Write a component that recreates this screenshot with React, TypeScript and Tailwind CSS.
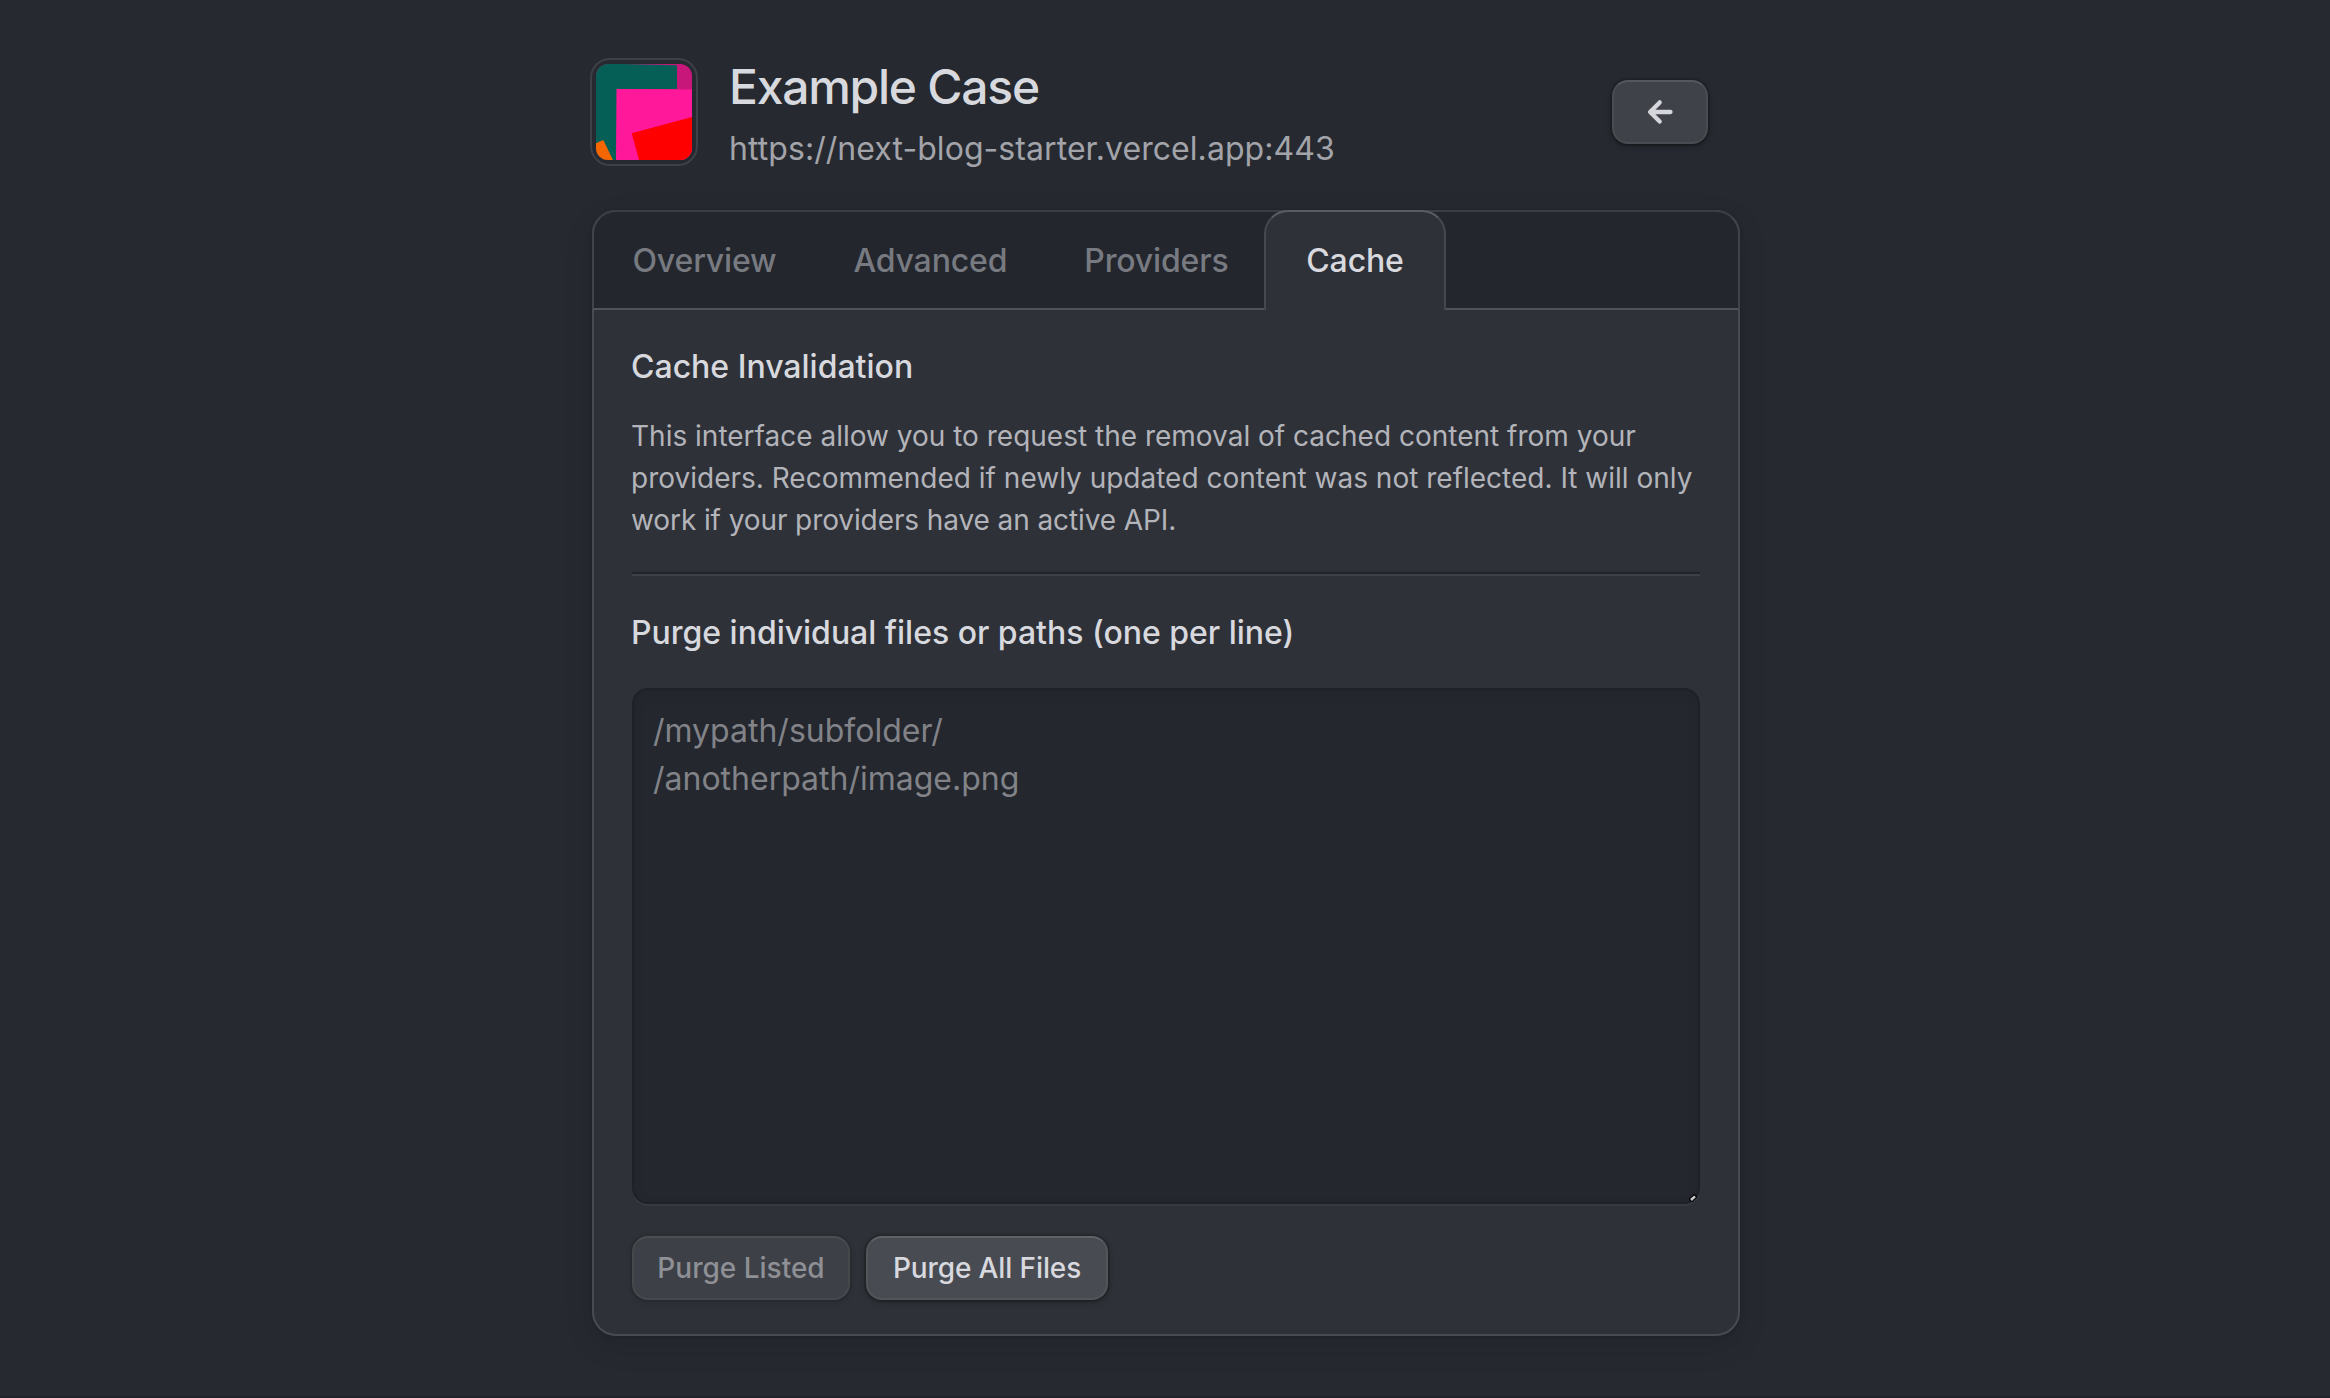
function Avatar() {
  return (
    <div className="mt-1 size-[108px] shrink-0 rounded-[20px] border-2 border-[#3d4047] p-1">
      <svg viewBox="0 0 96 96" className="size-24 rounded-xl">
        <rect width="96" height="96" fill="#c8177b" />
        <path d="M0 0H27L81 1.3V25H21V96H0Z" fill="#055f56" />
        <path d="M20.5 24.9L96 25.4V96H20Z" fill="#ff1899" />
        <path d="M35.7 69.3L96 53V96H43Z" fill="#ff0000" />
        <path d="M0 79.3L7.3 76L17 96H0Z" fill="#f56600" />
      </svg>
    </div>
  );
}

function BackButton() {
  return (
    <button
      aria-label="Back"
      className="mt-[26px] mr-8 ml-auto flex h-16 w-24 items-center justify-center rounded-2xl border-2 border-[#4a4c51] border-t-[#55575c] bg-[#3f4248] text-[#d6d7dd] shadow-[0_0_0_2px_rgba(0,0,0,0.13),0_2px_6px_rgba(0,0,0,0.3)]"
    >
      <svg viewBox="0 0 32 32" className="size-8" fill="none" stroke="currentColor" strokeWidth="4.3" strokeLinecap="round" strokeLinejoin="round">
        <path d="M15.7 6.4L6.1 16L15.7 25.6M7 16H26.5" />
      </svg>
    </button>
  );
}

const idleTabs = ["Overview", "Advanced", "Providers"];

function Tabs() {
  return (
    <nav className="-mx-0.5 -mt-0.5 flex h-[100px] rounded-t-3xl text-[32px] font-medium tracking-[-0.005em] text-[#777a80]">
      <div className="flex w-[672px] rounded-tl-3xl border-t-2 border-b-2 border-l-2 border-t-[#3c3e43] border-b-[#50525a] border-l-[#414348] bg-[#23262d]">
        {idleTabs.map((t) => (
          <button key={t} className="shrink-0 px-[38.5px] pt-0.5 last:pr-0">
            {t}
          </button>
        ))}
      </div>
      <div className="relative w-[182px] bg-[#23262d]">
        <div className="absolute inset-x-0 top-0 h-6 border-t-2 border-[#3c3e43]" />
        <button className="relative size-full rounded-t-3xl border-2 border-b-0 border-[#46484f] border-t-[#5a5c63] bg-[#2e3138] text-[#d8d9de]">
          Cache
        </button>
      </div>
      <div className="flex-1 rounded-tr-3xl border-t-2 border-r-2 border-b-2 border-t-[#3c3e43] border-r-[#414348] border-b-[#50525a] bg-[#23262d]" />
    </nav>
  );
}

function PathsInput() {
  return (
    <div className="relative mt-[31px] h-[516px]">
      <textarea
        placeholder={"/mypath/subfolder/\n/anotherpath/image.png"}
        className="block size-full resize-none rounded-2xl border-2 border-[#1e2128] bg-[#24272e] px-[19px] py-[17px] text-[32px] leading-[48px] shadow-[0_2px_0_rgba(255,255,255,0.04),inset_0_4px_12px_rgba(0,0,0,0.08)] placeholder:text-[#818388] placeholder:opacity-100"
      />
      <svg viewBox="0 0 8 8" className="absolute right-[3px] bottom-0.5 size-2">
        <path d="M1 7L7 1" stroke="#08090b" strokeWidth="5" />
        <path d="M2 6L6 2.4" stroke="#c9cacc" strokeWidth="2.4" />
      </svg>
    </div>
  );
}

export default function App() {
  return (
    <div className="flex h-[1398px] justify-center overflow-hidden border-b-2 border-[#212329] bg-[#262930] font-[Inter,sans-serif] text-[#d8d9de]">
      <main className="ml-0.5 w-[1148px] pt-[54px]">
        <header className="-ml-0.5 flex h-[156px] items-start">
          <Avatar />
          <div className="ml-[31px] pt-px">
            <h1 className="text-[48px] leading-[64px] font-medium tracking-[-0.026em]">Example Case</h1>
            <p className="mt-1.5 text-[32px] leading-[48px] tracking-[0.002em] text-[#a3a4aa]">https://next-blog-starter.vercel.app:443</p>
          </div>
          <BackButton />
        </header>

        <section className="h-[1126px] rounded-3xl border-2 border-[#494b50] bg-[#2e3138] shadow-[0_0_4px_rgba(0,0,0,0.15),0_10px_30px_rgba(0,0,0,0.11)]">
          <Tabs />
          <div className="px-[38px] pt-[33px]">
            <h2 className="-ml-px text-[32px] leading-[48px] font-medium">Cache Invalidation</h2>
            <p className="mt-6 -ml-px text-[28px] leading-[42px] text-[#b3b4ba]">
              This interface allow you to request the removal of cached content from your
              <br />
              providers. Recommended if newly updated content was not reflected. It will only
              <br />
              <span className="tracking-[-0.0035em]">work if your providers have an active API.</span>
            </p>
            <hr className="mt-[31px] h-1 border-t-2 border-b-2 border-t-[#212329] border-b-[#3e4046]" />
            <h2 className="mt-[33px] -ml-px text-[32px] leading-[48px] font-medium tracking-[-0.0005em]">Purge individual files or paths (one per line)</h2>
            <PathsInput />
            <div className="mt-8 flex gap-4 text-[28px] font-medium">
              <button className="h-16 w-[218px] rounded-2xl border-2 border-[#46484c] border-t-[#4c4e52] bg-[#3d4047] text-[#8e9095] shadow-[0_0_0_2px_rgba(0,0,0,0.06),0_2px_6px_rgba(0,0,0,0.15)]">
                Purge Listed
              </button>
              <button className="h-16 w-[242px] rounded-2xl border-2 border-[#535559] border-t-[#606266] bg-[#484b52] tracking-[-0.004em] shadow-[0_0_0_2px_rgba(0,0,0,0.12),0_2px_6px_rgba(0,0,0,0.3)]">
                Purge All Files
              </button>
            </div>
          </div>
        </section>
      </main>
    </div>
  );
}
